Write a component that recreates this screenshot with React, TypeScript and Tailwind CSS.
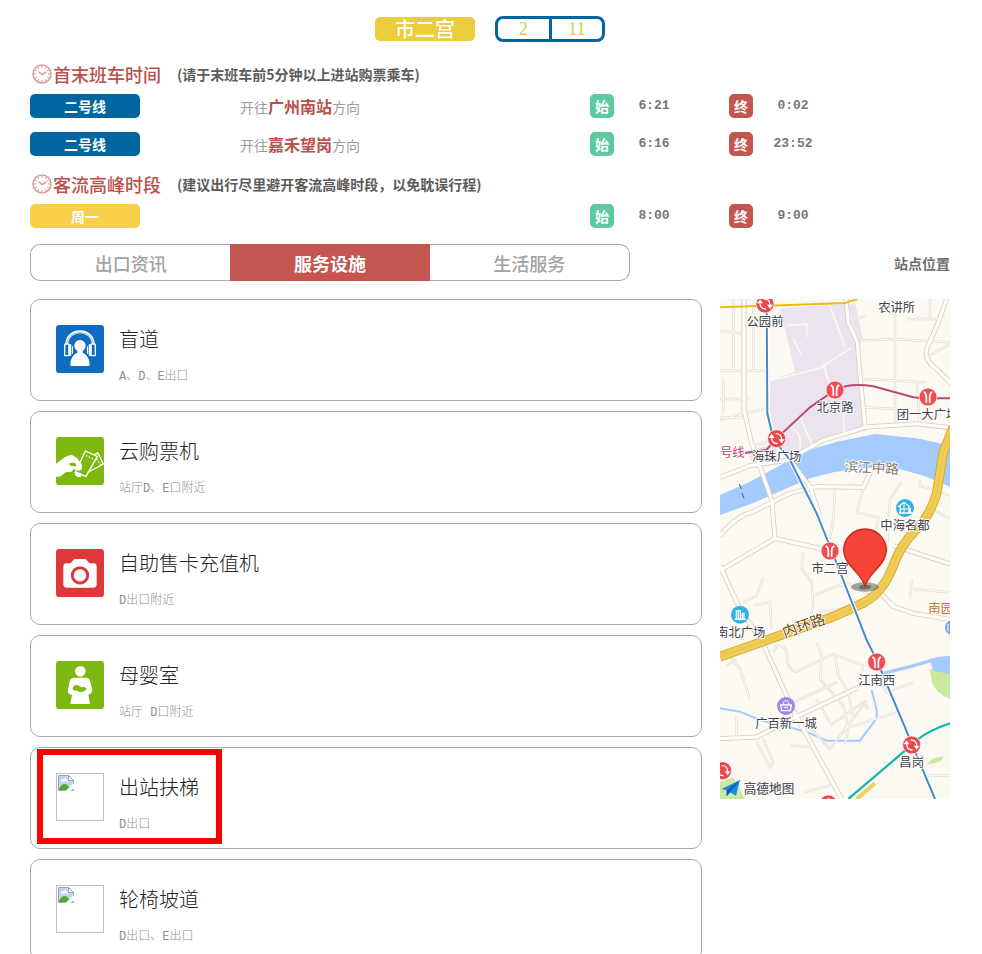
import type { ReactNode } from 'react'
import { clsx } from 'clsx'

interface Train {
  line: string
  direction?: string
  first: string
  last: string
}

interface Facility {
  name: string
  place: string
  icon?: ReactNode
  marked?: boolean
}

interface MapLabel {
  text: string
  x: number
  y: number
  color?: string
  anchor?: 'start' | 'middle'
}

const trains: Train[] = [
  { line: '二号线', direction: '广州南站', first: '6:21', last: '0:02' },
  { line: '二号线', direction: '嘉禾望岗', first: '6:16', last: '23:52' },
]

const peaks: Train[] = [{ line: '周一', first: '8:00', last: '9:00' }]

const tabs = ['出口资讯', '服务设施', '生活服务']

function GuideIcon() {
  return (
    <svg viewBox="0 0 144 144" className="size-12">
      <rect width="144" height="144" rx="10" fill="#0f6cc0" />
      <path d="M32 58C34 8 110 8 112 58" fill="none" stroke="#fff" strokeWidth="9" />
      <path d="M32 56C36 12 108 12 112 56" fill="none" stroke="#5b9bd6" strokeWidth="2" />
      <g fill="#0f6cc0" stroke="#fff" strokeWidth="4">
        <rect x="26" y="57" width="13" height="35" rx="3" />
        <rect x="105" y="57" width="13" height="35" rx="3" />
      </g>
      <g fill="#fff">
        <rect x="38" y="57" width="8" height="35" rx="3" />
        <rect x="98" y="57" width="8" height="35" rx="3" />
        <path d="M48 64h3v22h-3zM93 64h3v22h-3z" />
        <circle cx="72" cy="62" r="17" />
        <path d="M64 74h16v9c12 5 20 16 21 36q0 4-5 4H48q-5 0-5-4c1-20 9-31 21-36z" />
      </g>
    </svg>
  )
}

function TicketIcon() {
  return (
    <svg viewBox="0 0 144 144" className="size-12">
      <rect width="144" height="144" rx="10" fill="#7db910" />
      <g fill="#7db910" stroke="#fff" strokeWidth="4" strokeLinejoin="round">
        <path d="M125 47l17 34-44 24-12-30z" />
        <path d="M88 42l36 16-34 60-32-12z" />
      </g>
      <path d="M90 56l20 9M122 66l12 18" stroke="#fff" strokeWidth="4" strokeDasharray="4 5" />
      <path
        d="M0 80L24 62Q40 52 50 55L64 64 72 76 78 84 78 96 70 102 60 98 54 96 46 104 28 106 14 118 0 120z"
        fill="#fff"
      />
      <path d="M55 106l8-2 14 6-2 9-10 1-8-6z" fill="#fff" />
      <path d="M38 80q10-5 20-1l4 7-10 2q-8 0-14-8z" fill="#7db910" />
    </svg>
  )
}

function CameraIcon() {
  return (
    <svg viewBox="0 0 144 144" className="size-12">
      <rect width="144" height="144" rx="10" fill="#de383d" />
      <path d="M32 43h12l8-10q2-3 6-3h28q4 0 6 3l8 10h12q10 0 10 10v53q0 10-10 10H32q-10 0-10-10V53q0-10 10-10z" fill="#fff" />
      <circle cx="72" cy="79" r="23" fill="none" stroke="#de383d" strokeWidth="9" />
    </svg>
  )
}

function NurseryIcon() {
  return (
    <svg viewBox="0 0 144 144" className="size-12">
      <rect width="144" height="144" rx="10" fill="#7db910" />
      <circle cx="73" cy="31" r="16" fill="#fff" />
      <path d="M54 50h36q10 0 13 12l6 26q0 7-6 10l-6 4 5 27H43l5-27-9-4q-5-4-3-11l5-26q3-11 13-11z" fill="#fff" />
      <path d="M53 76q4-6 12-3l12 6q10-3 16 5l-12 8q-8 2-16-2l-14-3q-4-6 2-11z" fill="#7db910" />
    </svg>
  )
}

function MissingImage() {
  return (
    <div className="size-12 border border-[#c0c0c0] p-px">
      <svg viewBox="0 0 32 32" className="size-4" fill="none">
        <path d="M2 2H21L30 11V30H2z" fill="#c3d5f3" />
        <path d="M6 13q0-4 4-4 2-4 6-1 4 1 3 5z" fill="#fff" />
        <path d="M2 30V26Q10 15 18 19L26 30z" fill="#55a838" />
        <path d="M21 1V11H31z" fill="#f4f4f4" stroke="#a3a3a3" strokeWidth="2" />
        <path d="M1 31V1H21L31 11V31z" stroke="#a3a3a3" strokeWidth="2" />
        <path d="M33 15L14 33H24L33 25z" fill="#fff" />
      </svg>
    </div>
  )
}

function ClockIcon() {
  return (
    <svg viewBox="0 0 40 40" className="size-5" fill="none" stroke="#e09a9a">
      <circle cx="20" cy="20" r="18" strokeWidth="3" />
      <path
        d="M20 4V8M20 32V36M4 20H8M32 20H36M12 6L14 10M28 6L26 10M6 12L10 14M34 12L30 14M6 28L10 26M34 28L30 26M12 34L14 30M28 34L26 30"
        strokeWidth="2"
      />
      <path d="M13 15L20 21 29 16" strokeWidth="3" />
    </svg>
  )
}

const facilities: Facility[] = [
  { name: '盲道', place: 'A、D、E出口', icon: <GuideIcon /> },
  { name: '云购票机', place: '站厅D、E口附近', icon: <TicketIcon /> },
  { name: '自助售卡充值机', place: 'D出口附近', icon: <CameraIcon /> },
  { name: '母婴室', place: '站厅 D口附近', icon: <NurseryIcon /> },
  { name: '出站扶梯', place: 'D出口', marked: true },
  { name: '轮椅坡道', place: 'D出口、E出口' },
]

// Map geometry is drawn at three units per pixel
const mainRoads = [
  'M72 0V333L95 433 155 603 165 718',
  'M378 0L385 70 412 130 422 250 435 380',
  'M680 0L655 70 620 150Q612 185 650 210L700 260',
  'M0 535L90 500 200 484 310 424 440 384 590 374 690 386',
  'M0 815L165 718 320 753M470 870L520 923 580 943 700 963',
  'M0 800L60 930 130 1035 220 1235 365 1500',
  'M0 1319L110 1314 220 1258 410 1168',
  'M0 710Q50 650 95 640L210 583 290 563 430 565 450 523',
  'M520 740L690 795',
  'M210 483L270 563 300 650',
]

const smallRoads = [
  'M0 95L72 105M0 215H150M0 300H90M100 20V215M72 345L150 325M0 365L72 340',
  'M525 40V370M420 125L525 120 690 130M430 240L620 250M610 180L690 135M590 250L600 380M435 325L525 330',
  'M0 355H70M40 0V210M10 240V340M100 440L160 425',
  'M630 0V60M560 60H660M400 60L440 50',
  'M345 570L340 660 330 720M430 570L410 640 475 655 470 690',
  'M545 550L510 600 500 760M600 540V560L690 590M620 620L690 660',
  'M250 760L245 810 275 850 280 920 270 960',
  'M280 890L380 850 470 900M300 940L420 920M575 840L570 900M580 870L690 880',
  'M130 835L110 890 70 910M100 920L150 910 155 990',
  'M160 1060L170 1040Q195 1040 200 1060L205 1100 225 1120M290 1030L305 1070 300 1140 370 1220 385 1290 375 1335',
  'M225 1120L340 1065 430 1100 415 1160M345 1070L355 1130 385 1180 400 1260',
  'M220 1210L350 1150M250 1265L330 1350 440 1205M290 1200L330 1270M330 1280L430 1210 445 1230',
  'M370 1290L530 1240M20 1060L60 1110 90 1200M50 1250V1310M20 1100L50 1080',
  'M110 1330L150 1405 160 1390 130 1320M210 1340L280 1345',
  'M490 1160L500 1180 580 1150M490 1390L520 1400M610 1430H690M250 1480L330 1460M80 1480L220 1470',
]

const districtRoads =
  'M330 20L375 145M150 245L300 208 395 145M310 195L330 265M200 80L260 75V115M220 120L245 170M240 355L280 445M370 320L372 400M220 390Q245 400 240 450'

const ringRoad = 'M700 385L670 460 650 583Q630 650 590 690 540 740 520 800 490 880 430 912L340 953 170 1013 0 1073'

const lineTwo = 'M140 0L142 343 160 420 210 483 290 643 345 780 440 1023 470 1083 575 1333 645 1500'

const stations = [
  { x: 345, y: 273 },
  { x: 624, y: 294 },
  { x: 330, y: 756 },
  { x: 470, y: 1089 },
]

const interchanges = [
  { x: 135, y: 15 },
  { x: 170, y: 419 },
  { x: 575, y: 1338 },
  { x: 8, y: 1415 },
  { x: 325, y: 1515 },
]

const labels: MapLabel[] = [
  { text: '公园前', x: 135, y: 81 },
  { text: '农讲所', x: 530, y: 39 },
  { text: '北京路', x: 345, y: 339 },
  { text: '团一大广场', x: 530, y: 361, anchor: 'start' },
  { text: '号线', x: 0, y: 475, anchor: 'start', color: '#b5456b' },
  { text: '海珠广场', x: 170, y: 487 },
  { text: '中海名都', x: 555, y: 693 },
  { text: '市二宫', x: 330, y: 823 },
  { text: '南北广场', x: 62, y: 1014 },
  { text: '南园', x: 625, y: 942, anchor: 'start', color: '#b8741a' },
  { text: '江南西', x: 470, y: 1157 },
  { text: '广百新一城', x: 198, y: 1287 },
  { text: '昌岗', x: 575, y: 1405 },
]

function StationMap() {
  return (
    <svg viewBox="0 0 690 1500" className="h-[500px] w-[230px] shrink-0 font-['Noto_Sans_CJK_SC',sans-serif]" fill="none">
      <rect width="690" height="1500" fill="#fcf9f2" />

      {/* Districts, water and parks */}
      <path d="M180 28L378 15 415 130 438 380 310 425 200 484 172 420 150 345V245L225 218z" fill="#ebe3ee" />
      <path d="M385 20L405 10 430 125 415 130z" fill="#ebe3ee" />
      <path d="M80 455L160 435 185 480 100 500z" fill="#ebe3ee" />
      <path
        d="M0 588L90 548 210 483 245 460 350 428 465 405 590 418 660 433 690 445V563L620 533 550 513 490 505 420 508 340 520 270 538 210 563 100 612 0 648z"
        fill="#a3cbfd"
      />
      <path d="M58 555L64 570M66 582L72 598" stroke="#49607f" strokeWidth="3" />
      <path d="M630 1110L690 1105V1200Q650 1185 635 1150z" fill="#cbe8a0" />
      <path d="M618 1398L640 1378 672 1372 660 1388z" fill="#cbe8a0" />
      <path d="M0 1450L40 1435 75 1500H0z" fill="#cbe8a0" />
      <path d="M0 1228L60 1238 120 1263 220 1288 270 1303 320 1325H420L470 1258V1233L455 1173" stroke="#a3cbfd" strokeWidth="6" />
      <path d="M490 1123L570 1103 650 1080 690 1075" stroke="#a3cbfd" strokeWidth="10" />
      <path d="M630 1085L690 1075V1125L640 1115z" fill="#a3cbfd" />

      {/* Streets */}
      {smallRoads.map(d => (
        <path key={d} d={d} stroke="#e0dcd4" strokeWidth="7" />
      ))}
      {mainRoads.map(d => (
        <path key={d} d={d} stroke="#d3cfc5" strokeWidth="15" />
      ))}
      {smallRoads.map(d => (
        <path key={d} d={d} stroke="#fefdfa" strokeWidth="3" />
      ))}
      {mainRoads.map(d => (
        <path key={d} d={d} stroke="#fdfcf7" strokeWidth="10" />
      ))}
      <path d={districtRoads} stroke="#fbf8ef" strokeWidth="5" />

      {/* Ring road */}
      <g strokeLinejoin="round">
        <path d={ringRoad} stroke="#dcaa2c" strokeWidth="29" />
        <path d={ringRoad} stroke="#efcc55" strokeWidth="23" />
        <path d={ringRoad} stroke="#e6bd47" strokeWidth="2" />
      </g>
      <path d="M465 1453L410 1500" stroke="#efcf5d" strokeWidth="12" />

      {/* Metro lines */}
      <path d="M0 25L375 12 412 0" stroke="#e9bb1b" strokeWidth="6" />
      <path d={lineTwo} stroke="#fff" strokeWidth="12" />
      <path d={lineTwo} stroke="#4789cb" strokeWidth="6" />
      <path d="M75 462L140 452 170 418 270 325 345 273Q390 250 460 262L580 295Q600 298 620 298H690" stroke="#b94a70" strokeWidth="6" />
      <path d="M690 1273Q610 1300 575 1338L385 1500" stroke="#fff" strokeWidth="11" />
      <path d="M690 1273Q610 1300 575 1338L385 1500" stroke="#1bb7a5" strokeWidth="7" />

      {stations.map(s => (
        <g key={`${s.x}-${s.y}`} transform={`translate(${s.x} ${s.y})`}>
          <circle r="27" fill="#f24c52" stroke="#fff" strokeWidth="2" />
          <path d="M-13-15Q-5-12-5 0V18M13-15Q5-12 5 0V18" stroke="#fff" strokeWidth="5" />
        </g>
      ))}
      {interchanges.map(s => (
        <g key={`${s.x}-${s.y}`} transform={`translate(${s.x} ${s.y})`}>
          <circle r="27" fill="#ec474d" stroke="#fff" strokeWidth="2" />
          <path d="M-3-15Q16-15 15 5M3 15Q-16 15-15-5" stroke="#fff" strokeWidth="4" />
          <path d="M6 2H24L15 14zM-6-2H-24L-15-14z" fill="#fff" />
        </g>
      ))}

      {/* Places */}
      <circle cx="555" cy="627" r="27" fill="#2eb1e6" />
      <path d="M541 641V622H537L552 610 567 622V641M571 627V641M537 642H577" stroke="#fff" strokeWidth="4" />
      <path d="M552 641V616M542 630H566" stroke="#fff" strokeWidth="3" />
      <circle cx="60" cy="947" r="27" fill="#2eb1e6" />
      <path d="M49 961V935H61V961M55 935V961M67 961V943H72V961M44 961H78" stroke="#fff" strokeWidth="4" />
      <circle cx="198" cy="1221" r="27" fill="#a085e2" />
      <path d="M182 1218H214L211 1235H185z" stroke="#fff" strokeWidth="4" />
      <path d="M190 1217V1210Q198 1200 206 1210V1217M191 1226H205" stroke="#fff" strokeWidth="3" />
      <circle cx="697" cy="986" r="22" fill="#7c9fec" />
      <path d="M684 975V997M692 975V997" stroke="#fff" strokeWidth="3" />

      {labels.map(label => (
        <text
          key={label.text}
          x={label.x}
          y={label.y}
          textAnchor={label.anchor ?? 'middle'}
          fill={label.color ?? '#40424a'}
          stroke="#fff"
          strokeWidth="5"
          paintOrder="stroke"
          fontSize="37"
        >
          {label.text}
        </text>
      ))}
      <g strokeWidth="5" paintOrder="stroke" stroke="#fff" textAnchor="middle">
        <text x="455" y="521" fontSize="41" fill="#83776f" transform="rotate(3 457 508)">滨江中路</text>
        <text x="251" y="995" fontSize="44" fill="#6b4a17" transform="rotate(-19 253 980)">内环路</text>
        <text x="147" y="1482" fontSize="38" fill="#55585c" fontWeight="500">高德地图</text>
      </g>
      <path d="M5 1470L60 1443 48 1490 30 1480 20 1492 20 1474z" fill="#1688e6" />
      <path d="M60 1443L20 1474 20 1492 30 1480z" fill="#0d5fb5" />

      {/* Current station */}
      <ellipse cx="435" cy="864" rx="42" ry="14" fill="#6d6a64" opacity="0.6" />
      <ellipse cx="435" cy="864" rx="18" ry="7" fill="#4d4a46" opacity="0.6" />
      <path d="M435 864C430 825 371 800 371 754A64 64 0 0 1 499 754C499 800 440 825 435 864z" fill="#f54336" stroke="#c9271d" strokeWidth="4" />
    </svg>
  )
}

function SectionTitle({ title, note }: { title: string; note: string }) {
  return (
    <h2 className="flex h-[26px] items-center pl-0.5 text-lg leading-5 font-medium text-[#bb4f4a]">
      <ClockIcon />
      <span className="ml-px">{title}</span>
      <small className="ml-4 text-sm leading-5 font-bold text-[#5c5c5c]">({note})</small>
    </h2>
  )
}

function TimeCell({ kind, time }: { kind: 'first' | 'last'; time: string }) {
  return (
    <div className="flex items-center">
      <span
        className={clsx(
          'flex size-6 items-center justify-center rounded-[5px] text-sm leading-6 font-bold text-white',
          kind === 'first' ? 'bg-[#5cc99e]' : 'bg-[#c35650]'
        )}
      >
        {kind === 'first' ? '始' : '终'}
      </span>
      <span className="w-20 text-center font-['Liberation_Mono',monospace] text-[13px] font-bold text-[#777]">{time}</span>
    </div>
  )
}

function Timetable({ rows, color, label }: { rows: Train[]; color: string; label: string }) {
  return (
    <table className="w-full table-fixed" aria-label={label}>
      <colgroup>
        <col className="w-[210px]" />
        <col className="w-[350px]" />
        <col className="w-[139px]" />
        <col />
      </colgroup>
      <tbody>
        {rows.map(row => (
          <tr key={row.line + row.first} className="h-[38px]">
            <td>
              <span className={clsx('block h-6 w-[110px] rounded-[5px] text-center text-sm leading-6 font-bold text-white', color)}>
                {row.line}
              </span>
            </td>
            <td className="text-sm text-[#9c9c9c]">
              {row.direction && (
                <>
                  开往<strong className="text-base leading-6 font-bold text-[#bb4f4a]">{row.direction}</strong>方向
                </>
              )}
            </td>
            <td><TimeCell kind="first" time={row.first} /></td>
            <td><TimeCell kind="last" time={row.last} /></td>
          </tr>
        ))}
      </tbody>
    </table>
  )
}

function FacilityCard({ facility }: { facility: Facility }) {
  return (
    <li className="relative flex h-[102px] gap-[15px] rounded-[10px] border border-[#a9a9a9] p-[25px]">
      {facility.icon ?? <MissingImage />}
      <div>
        <h3 className="text-xl leading-7 font-light text-[#222]">{facility.name}</h3>
        <p className="mt-4 font-['Liberation_Mono','Noto_Sans_CJK_SC',monospace] text-xs leading-4 font-light text-[#909090]">
          {facility.place}
        </p>
      </div>
      {facility.marked && <div className="absolute top-px left-1.5 h-[95px] w-[185px] border-6 border-[#ff0000]" />}
    </li>
  )
}

export default function App() {
  return (
    <div className="h-screen overflow-hidden bg-white pt-4 pr-8 pl-[30px] font-['Noto_Sans_CJK_SC',sans-serif]">
      <header className="flex items-center justify-center gap-5">
        <h1 className="h-6 w-[100px] rounded-[5px] bg-[#ebcd3b] text-center text-xl leading-6 font-medium text-white">市二宫</h1>
        <div className="flex h-[26px] w-[110px] divide-x-3 divide-[#00669c] rounded-lg border-3 border-[#00669c] text-center font-['Liberation_Serif',serif] text-lg leading-5 text-[#e6c544]">
          <span className="flex-1">2</span>
          <span className="flex-1">11</span>
        </div>
      </header>

      <section className="mt-[19px]">
        <SectionTitle title="首末班车时间" note="请于末班车前5分钟以上进站购票乘车" />
        <Timetable rows={trains} color="bg-[#00669f]" label="首末班车时间" />
      </section>

      <section className="mt-2">
        <SectionTitle title="客流高峰时段" note="建议出行尽里避开客流高峰时段，以免耽误行程" />
        <Timetable rows={peaks} color="bg-[#f8cf48]" label="客流高峰时段" />
      </section>

      <div className="mt-[9px] flex items-center justify-between">
        <div role="tablist" className="flex h-[37px] w-[600px]">
          {tabs.map((tab, i) => (
            <button
              key={tab}
              role="tab"
              aria-selected={i === 1}
              className={clsx(
                'flex-1 border-y text-lg leading-6 first:rounded-l-[10px] first:border-l last:rounded-r-[10px] last:border-r',
                i === 1 ? 'border-[#c4554f] bg-[#c4554f] font-bold text-white' : 'border-[#a9a9a9] font-medium text-[#a3a3a3]'
              )}
            >
              {tab}
            </button>
          ))}
        </div>
        <h2 className="text-sm font-bold text-[#707070]">站点位置</h2>
      </div>

      <main className="mt-[18px] flex items-start gap-[18px]">
        <ul className="flex flex-1 flex-col gap-2.5">
          {facilities.map(facility => (
            <FacilityCard key={facility.name} facility={facility} />
          ))}
        </ul>
        <StationMap />
      </main>
    </div>
  )
}
